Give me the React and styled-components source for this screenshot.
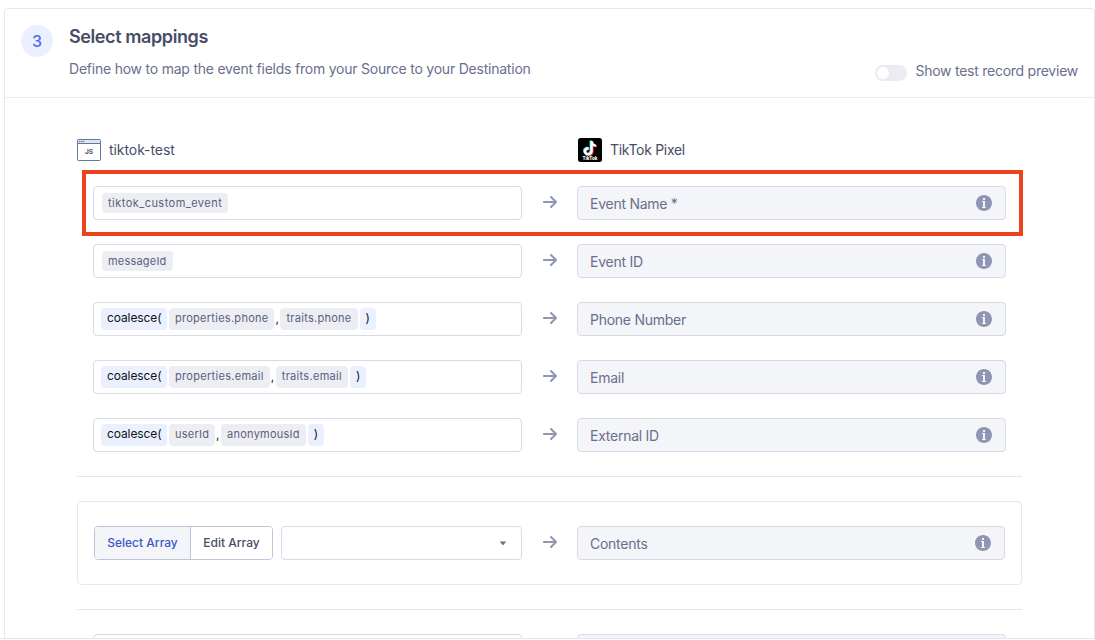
import React from "react";
import styled, { createGlobalStyle } from "styled-components";

const GlobalStyle = createGlobalStyle`
  *, *::before, *::after { box-sizing: border-box; }
  body {
    margin: 0;
    background: #fff;
    font-family: Inter, "Liberation Sans", sans-serif;
    color: #474d66;
    overflow: hidden;
  }
`;

const Viewport = styled.div`
  height: 639px;
  padding: 8px 0 0 4px;
  overflow: hidden;
  border-bottom: 1px solid #e6e8f0;
`;

const Card = styled.section`
  width: 1091px;
  height: 700px;
  border: 1px solid #e6e8f0;
  border-radius: 4px;
`;

const Header = styled.header`
  display: flex;
  align-items: flex-start;
  height: 89px;
  padding: 16px 16px 0;
  border-bottom: 1px solid #e9eaf2;
`;

const StepBadge = styled.div`
  flex: none;
  width: 32px;
  height: 32px;
  margin-right: 16px;
  border-radius: 50%;
  background: #ebf0ff;
  color: #4d6bf5;
  font-size: 16px;
  font-weight: 500;
  line-height: 32px;
  text-align: center;
`;

const Heading = styled.div`
  flex: 1;
`;

const Title = styled.h2`
  margin: 0;
  font-size: 18px;
  font-weight: 600;
  line-height: 24px;
  letter-spacing: -0.4px;
`;

const Subtitle = styled.p`
  margin: 10px 0 0;
  color: #696f8c;
  font-size: 14px;
  line-height: 20px;
  letter-spacing: -0.225px;
`;

const PreviewToggle = styled.label`
  display: flex;
  align-items: center;
  gap: 8px;
  margin-top: 36px;
  color: #696f8c;
  font-size: 14px;
  line-height: 20px;
  letter-spacing: -0.25px;
`;

const Switch = styled.span`
  width: 32px;
  height: 16px;
  margin-top: 4px;
  padding: 2px;
  border-radius: 8px;
  background: #ecebf2;

  &::before {
    content: "";
    display: block;
    width: 12px;
    height: 12px;
    border-radius: 50%;
    background: #fff;
  }
`;

const Body = styled.div`
  padding: 40px 72px 0;
`;

const Columns = styled.div`
  display: grid;
  grid-template-columns: 501px 1fr;
  height: 24px;
  margin-bottom: 24px;
`;

const Endpoint = styled.div`
  display: flex;
  align-items: center;
  gap: 8px;
  font-size: 14px;
  line-height: 24px;
  letter-spacing: ${(p) => p.$tracking}px;
  svg { flex: none; display: block; letter-spacing: 0; }
`;

const Rows = styled.div`
  display: flex;
  flex-direction: column;
  gap: 24px;
  padding: 0 16px 24px;
`;

const Row = styled.div`
  position: relative;
  display: grid;
  grid-template-columns: 1fr 55px 1fr;
  height: 34px;
`;

const Highlight = styled.div`
  position: absolute;
  inset: -16px -17px -16px -11px;
  border: 4px solid #ec431d;
`;

const Field = styled.div`
  display: flex;
  align-items: center;
  flex: 1;
  height: 34px;
  padding: 0 7px;
  border: 1px solid #d8dae5;
  border-radius: 4px;
  background: #fff;
`;

const SelectField = styled(Field)`
  justify-content: flex-end;
  padding-right: 12px;
  svg { display: block; }
`;

const TargetField = styled(Field)`
  justify-content: space-between;
  padding: 0 13px 0 12px;
  background: #f4f5f9;
  color: #696f8c;
  font-size: 14px;
  letter-spacing: -0.26px;
  span { margin-top: 1px; line-height: 20px; }
`;

const ArrowCell = styled.div`
  display: flex;
  align-items: center;
  justify-content: center;
  padding: 0 0 2px 1px;
`;

const Token = styled.span`
  height: ${(p) => (p.$single ? 20 : 22)}px;
  margin: ${(p) => (p.$single ? "0 0 0 1px" : "0 0 1px 2px")};
  padding: 0 6px;
  border-radius: 4px;
  background: #edeef3;
  color: #5a607d;
  font-size: 11px;
  line-height: 20px;
  letter-spacing: ${(p) => p.$tracking ?? 0.27}px;
  white-space: nowrap;
`;

const FunctionToken = styled(Token)`
  flex: none;
  width: ${(p) => (p.$open ? 66 : 16)}px;
  margin-left: ${(p) => (p.$open ? 0 : 2)}px;
  background: #ebf0ff;
  color: #101217;
  font-size: 12px;
  letter-spacing: ${(p) => (p.$open ? -0.1 : 0)}px;
`;

const Comma = styled.span`
  width: 4px;
  margin-top: -1px;
  padding-left: 1px;
  color: #101217;
  font-size: 12px;
`;

const Divider = styled.hr`
  height: 1px;
  margin: 0 0 24px;
  border: 0;
  background: #e6e8f0;
`;

const ArrayBox = styled.div`
  height: 84px;
  margin-bottom: 24px;
  padding: 24px 16px;
  border: 1px solid #e6e8f0;
  border-radius: 4px;
`;

const ArraySource = styled.div`
  display: flex;
  gap: 8px;
`;

const ButtonGroup = styled.div`
  display: flex;
  width: 179px;
  height: 34px;
  border: 1px solid #c1c4d6;
  border-radius: 4px;
  overflow: hidden;
`;

const GroupButton = styled.button`
  width: ${(p) => (p.$active ? 96 : 81)}px;
  padding: 0;
  border: 0;
  border-right: ${(p) => (p.$active ? "1px solid #c1c4d6" : "0")};
  background: ${(p) => (p.$active ? "#f4f5f9" : "#fff")};
  color: ${(p) => (p.$active ? "#3d57c9" : "#474d66")};
  font: 500 12px/32px Inter, sans-serif;
  white-space: nowrap;
`;

const Arrow = () => (
  <svg width="16" height="16" viewBox="0 0 16 16" fill="#8f95b2">
    <path d="M14.7 7.29l-5-5a.965.965 0 00-.71-.3 1.003 1.003 0 00-.71 1.71l3.29 3.29H1.99c-.55 0-1 .45-1 1s.45 1 1 1h9.59l-3.29 3.29a1.003 1.003 0 001.42 1.42l5-5c.18-.18.29-.43.29-.71s-.12-.52-.3-.7z" />
  </svg>
);

const Info = () => (
  <svg width="16" height="16" viewBox="0 0 16 16" fill="#8f95b2">
    <path fillRule="evenodd" d="M8 0C3.58 0 0 3.58 0 8s3.58 8 8 8 8-3.58 8-8-3.58-8-8-8zM7 3h2v2H7V3zm3 10H6v-1h1V7H6V6h3v6h1v1z" />
  </svg>
);

const Caret = () => (
  <svg width="12" height="12" viewBox="0 0 16 16" fill="#696f8c">
    <path d="M12 6.5c0-.28-.22-.5-.5-.5h-7a.495.495 0 00-.37.83l3.5 4c.09.1.22.17.37.17s.28-.07.37-.17l3.5-4c.08-.09.13-.2.13-.33z" />
  </svg>
);

const JsIcon = () => (
  <svg width="24" height="24" viewBox="0 0 24 24">
    <rect x="0.5" y="1.5" width="23" height="21" rx="0.8" fill="#fff" stroke="#647a96" />
    <rect x="1" y="2" width="22" height="3" fill="#dfe5f0" />
    <path d="M1 5.5h22" stroke="#647a96" />
    <g fill="#647a96">
      <circle cx="2.7" cy="3.5" r="0.75" />
      <circle cx="4.7" cy="3.5" r="0.75" />
      <circle cx="6.7" cy="3.5" r="0.75" />
    </g>
    <text x="12" y="16.300" textAnchor="middle" fontFamily="Inter" fontSize="6.500" fontWeight="700" fill="#42526a">JS</text>
  </svg>
);

const NOTE =
  "M12.2 3h2.2c.2 2 1.4 3.300 3.300 3.500v2.300c-1.200 0-2.300-.4-3.200-1v5.100c0 5.300-7.400 6.100-8.700 1.600-.9-3.200 1.700-5.700 4.700-5.300v2.400c-1.700-.4-2.800.8-2.500 2.200.5 2.100 4.200 1.700 4.200-1z";

const TikTokIcon = () => (
  <svg width="24" height="24" viewBox="0 0 24 24">
    <rect width="24" height="24" rx="2.500" fill="#000" />
    <path d={NOTE} fill="#25f4ee" transform="translate(-0.600 -0.500)" />
    <path d={NOTE} fill="#fe2c55" transform="translate(1.100 0.500)" />
    <path d={NOTE} fill="#fff" transform="translate(0.250 0)" />
    <text x="12" y="22" textAnchor="middle" fontFamily="Inter" fontSize="4.500" fontWeight="800" fill="#fff">TikTok</text>
  </svg>
);

const Target = ({ label }) => (
  <>
    <ArrowCell><Arrow /></ArrowCell>
    <TargetField><span>{label}</span><Info /></TargetField>
  </>
);

const MAPPINGS = [
  { args: ["tiktok_custom_event"], tracking: 0.46, target: "Event Name *", highlighted: true },
  { args: ["messageId"], tracking: 0.2, target: "Event ID" },
  { args: ["properties.phone", "traits.phone"], target: "Phone Number" },
  { args: ["properties.email", "traits.email"], tracking: 0.3, target: "Email" },
  { args: ["userId", "anonymousId"], tracking: 0.23, target: "External ID" },
];

const Source = ({ args, tracking }) =>
  args.length === 1 ? (
    <Field><Token $single $tracking={tracking}>{args[0]}</Token></Field>
  ) : (
    <Field>
      <FunctionToken $open>coalesce(</FunctionToken>
      <Token $tracking={tracking}>{args[0]}</Token>
      <Comma>,</Comma>
      <Token $tracking={tracking}>{args[1]}</Token>
      <FunctionToken>)</FunctionToken>
    </Field>
  );

export default function App() {
  return (
    <>
      <GlobalStyle />
      <Viewport>
        <Card>
          <Header>
            <StepBadge>3</StepBadge>
            <Heading>
              <Title>Select mappings</Title>
              <Subtitle>Define how to map the event fields from your Source to your Destination</Subtitle>
            </Heading>
            <PreviewToggle><Switch />Show test record preview</PreviewToggle>
          </Header>
          <Body>
            <Columns>
              <Endpoint $tracking={-0.07}><JsIcon />tiktok-test</Endpoint>
              <Endpoint $tracking={-0.3}><TikTokIcon />TikTok Pixel</Endpoint>
            </Columns>
            <Rows>
              {MAPPINGS.map((m) => (
                <Row key={m.target}>
                  <Source args={m.args} tracking={m.tracking} />
                  <Target label={m.target} />
                  {m.highlighted && <Highlight />}
                </Row>
              ))}
            </Rows>
            <Divider />
            <ArrayBox>
              <Row>
                <ArraySource>
                  <ButtonGroup>
                    <GroupButton $active>Select Array</GroupButton>
                    <GroupButton>Edit Array</GroupButton>
                  </ButtonGroup>
                  <SelectField><Caret /></SelectField>
                </ArraySource>
                <Target label="Contents" />
              </Row>
            </ArrayBox>
            <Divider />
            <Rows>
              <Row>
                <Field />
                <Target label="" />
              </Row>
            </Rows>
          </Body>
        </Card>
      </Viewport>
    </>
  );
}
